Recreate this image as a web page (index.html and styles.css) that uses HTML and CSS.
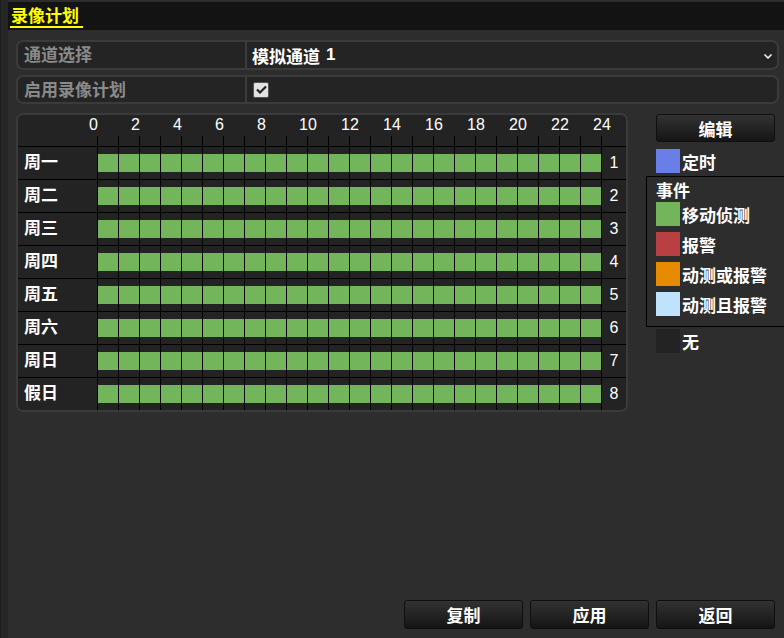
FILE: index.html
```html
<!DOCTYPE html>
<html lang="zh">
<head>
<meta charset="utf-8">
<link rel="stylesheet" href="styles.css">
</head>
<body>
<div class="app">
  <div class="side"></div>
  <div class="main">
    <div class="header"><span class="title">录像计划</span></div>
    <div class="content">
      <div class="field f1">
        <div class="label">通道选择</div>
        <div class="value"><span>模拟通道</span><span class="digit">1</span>
          <svg class="chev" width="8" height="5" viewBox="0 0 8 5"><polyline points="0.5,0.5 4,4 7.5,0.5" fill="none" stroke="#fff" stroke-width="1.5"/></svg>
        </div>
      </div>
      <div class="field f2">
        <div class="label">启用录像计划</div>
        <div class="value"><span class="check"><svg width="11" height="9" viewBox="0 0 11 9"><polyline points="1,4.5 4,7.5 10,1.5" fill="none" stroke="#222" stroke-width="2.2"/></svg></span></div>
      </div>
      <div class="sched-wrap">
        <div class="sched">
          <div class="hours">
            <span>0</span><span>2</span><span>4</span><span>6</span><span>8</span><span>10</span><span>12</span><span>14</span><span>16</span><span>18</span><span>20</span><span>22</span><span>24</span>
          </div>
          <div class="ticks" id="ticks"></div>
          <div class="rows" id="rows"></div>
        </div>
        <div class="right">
          <button class="btn edit">编辑</button>
          <div class="item timed"><span class="sw blue"></span>定时</div>
          <div class="events">
            <div class="ev-title">事件</div>
            <div class="item"><span class="sw green"></span>移动侦测</div>
            <div class="item"><span class="sw red"></span>报警</div>
            <div class="item"><span class="sw orange"></span>动测或报警</div>
            <div class="item"><span class="sw lblue"></span>动测且报警</div>
          </div>
          <div class="item none"><span class="sw dark"></span>无</div>
        </div>
      </div>
      <div class="actions">
        <button class="btn">复制</button>
        <button class="btn">应用</button>
        <button class="btn">返回</button>
      </div>
    </div>
  </div>
</div>
<script src="app.js"></script>
</body>
</html>
```
FILE: app.js
```js
(function () {
  var ticks = document.getElementById('ticks');
  var t = '';
  for (var i = 0; i < 24; i++) t += '<i></i>';
  ticks.innerHTML = t + '<b></b>';
  var days = ['周一', '周二', '周三', '周四', '周五', '周六', '周日', '假日'];
  var rows = document.getElementById('rows');
  var html = '';
  for (var d = 0; d < days.length; d++) {
    html += '<div class="row"><div class="day">' + days[d] + '</div><div class="cells">';
    for (var h = 0; h < 24; h++) html += '<div class="cell"><div class="bar"></div></div>';
    html += '</div><div class="num">' + (d + 1) + '</div></div>';
  }
  rows.innerHTML = html;
})();
```
FILE: styles.css
```css
* { box-sizing: border-box; }
html, body { margin: 0; padding: 0; }
body {
  width: 784px;
  height: 638px;
  overflow: hidden;
  background: #2d2d2d;
  font-family: "Noto Sans CJK SC", "Liberation Sans", sans-serif;
  font-size: 17px;
  color: #fff;
}
.app { display: flex; width: 784px; height: 638px; }
.side {
  width: 8px;
  flex: none;
  background: #262626;
  border-left: 1px solid #1c1c1c;
}
.main {
  flex: 1;
  min-width: 0;
  overflow: hidden;
  display: flex;
  flex-direction: column;
}
.header {
  margin-top: 2px;
  height: 28px;
  background: #131313;
  padding-left: 2px;
}
.title {
  display: inline-block;
  color: #ffff00;
  font-weight: 700;
  font-size: 17px;
  line-height: 22px;
  padding: 0 4px 0 1px;
  border-bottom: 2px solid #ffff00;
}
.content {
  flex: 1;
  min-width: 0;
  display: flex;
  flex-direction: column;
  padding: 10px 0 9px 8px;
}
.field {
  width: 763px;
  display: flex;
  border: 2px solid #3b3b3b;
  border-radius: 7px;
  background: #242424;
}
.f1 { height: 30px; }
.f2 { height: 29px; margin-top: 5px; }
.label {
  width: 229px;
  flex: none;
  border-right: 2px solid #3b3b3b;
  color: #8a8a8a;
  font-weight: 700;
  padding-left: 6px;
  line-height: 24px;
}
.value {
  flex: 1;
  display: flex;
  align-items: center;
  padding-left: 5px;
  font-weight: 700;
  position: relative;
}
.digit {
  font-family: "Liberation Sans", sans-serif;
  font-size: 17px;
  font-weight: 700;
  margin-left: 6px;
}
.chev { position: absolute; right: 5px; top: 12px; }
.check {
  width: 16px; height: 16px;
  background: #e2e2e2;
  border: 1px solid #555;
  border-radius: 2px;
  display: flex; align-items: center; justify-content: center;
  margin-left: 1px;
}
.sched-wrap { display: flex; margin-top: 9px; }
.sched {
  width: 612px;
  height: 299px;
  flex: none;
  border: 2px solid #3a3a3a;
  border-radius: 7px;
  background: #232323;
  overflow: hidden;
}
.hours {
  display: flex;
  padding-left: 71px;
  height: 21px;
  font-family: "Liberation Sans", sans-serif;
  font-size: 16px;
  line-height: 20px;
}
.hours span { width: 42px; flex: none; }
.ticks {
  display: flex;
  padding-left: 79px;
  height: 10px;
}
.ticks i { width: 21px; border-left: 1px solid #000; flex: none; }
.ticks b { width: 1px; background: #000; }
.row {
  display: flex;
  height: 33px;
  border-top: 1px solid #000;
}
.day {
  width: 79px;
  flex: none;
  padding-left: 6px;
  font-weight: 700;
  line-height: 28px;
}
.cells { display: flex; border-right: 1px solid #000; }
.cell {
  width: 21px;
  border-left: 1px solid #000;
  padding-top: 7px;
}
.bar { height: 18px; background: #73b55a; }
.num {
  flex: 1;
  text-align: center;
  font-family: "Liberation Sans", sans-serif;
  font-size: 16px;
  line-height: 31px;
}
.right { margin-left: 18px; flex: 1; min-width: 0; overflow: hidden; }
.btn {
  width: 119px;
  height: 29px;
  border: 1px solid #0f0f0f;
  border-radius: 3px;
  background: linear-gradient(#323232, #151515);
  color: #fff;
  font-family: "Noto Sans CJK SC", sans-serif;
  font-weight: 700;
  font-size: 17px;
  padding: 0;
  flex: none;
}
.edit { margin: 1px 0 0 10px; height: 28px; }
.item {
  display: flex;
  align-items: center;
  height: 24px;
  font-weight: 700;
  padding-left: 10px;
  white-space: nowrap;
}
.sw { width: 24px; height: 24px; margin-right: 2px; flex: none; }
.timed { margin-top: 7px; }
.events {
  margin-top: 3px;
  width: 160px;
  height: 151px;
  border: 1px solid #000;
}
.ev-title { padding-left: 9px; font-weight: 700; line-height: 25px; height: 25px; }
.events .item { margin-bottom: 6px; padding-left: 9px; }
.none { margin-top: 2px; }
.blue { background: #6a7ee8; }
.green { background: #73b55a; }
.red { background: #b84043; }
.orange { background: #e68a00; }
.lblue { background: #bfe3fd; }
.dark { background: #232323; }
.actions {
  margin-top: auto;
  display: flex;
  justify-content: flex-end;
  gap: 7px;
  padding-right: 9px;
}
```
